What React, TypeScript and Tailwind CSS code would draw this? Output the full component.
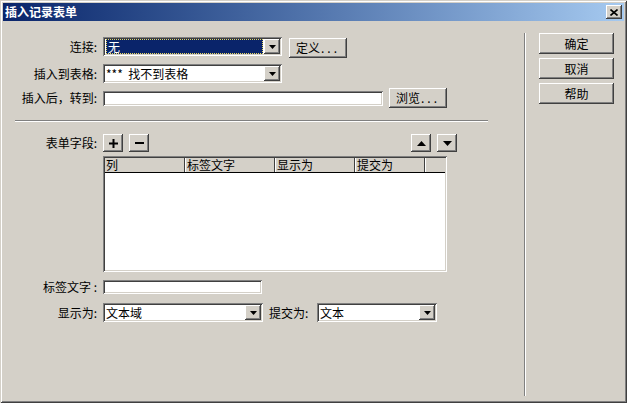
import React from "react";

const sunken =
  "shadow-[inset_1px_1px_0_#808080,inset_-1px_-1px_0_#ffffff,inset_2px_2px_0_#404040,inset_-2px_-2px_0_#d4d0c8]";
const raised =
  "shadow-[inset_-1px_-1px_0_#404040,inset_1px_1px_0_#ffffff,inset_-2px_-2px_0_#808080,inset_2px_2px_0_#d4d0c8]";

function DownTri() {
  return (
    <svg width="7" height="4" viewBox="0 0 7 4">
      <path d="M0 0H7L3.5 4Z" fill="#000" />
    </svg>
  );
}

function UpTri() {
  return (
    <svg width="9" height="5" viewBox="0 0 9 5">
      <path d="M0 5H9L4.5 0Z" fill="#000" />
    </svg>
  );
}

function DropBtn() {
  return (
    <div className={`w-[16px] h-full flex items-center justify-center bg-[#d4d0c8] ${raised}`}>
      <DownTri />
    </div>
  );
}

function Select({ w, children }: { w: string; children: React.ReactNode }) {
  return (
    <div className={`${w} h-[19px] flex p-[2px] bg-white ${sunken}`}>
      <div className="flex-1 flex items-center pl-[1px] overflow-hidden whitespace-pre">{children}</div>
      <DropBtn />
    </div>
  );
}

function Label({ children }: { children: React.ReactNode }) {
  return <div className="w-[97px] pr-[3px] text-right whitespace-pre">{children}</div>;
}

function Btn({ w, h, children }: { w: string; h: string; children: React.ReactNode }) {
  return (
    <div className={`${w} ${h} flex items-center justify-center bg-[#d4d0c8] ${raised}`}>{children}</div>
  );
}

export default function App() {
  return (
    <div
      className="w-[627px] h-[403px] bg-[#d4d0c8] p-[3px] flex flex-col text-[12px] leading-[14px] text-black shadow-[inset_1px_1px_0_#d4d0c8,inset_-1px_-1px_0_#404040,inset_2px_2px_0_#ffffff,inset_-2px_-2px_0_#808080]"
      style={{ fontFamily: '"Noto Sans CJK SC", "Noto Sans", sans-serif' }}
    >
      {/* Title bar */}
      <div className="h-[18px] flex items-center justify-between pl-[2px] pr-[2px] bg-gradient-to-r from-[#0a246a] to-[#a6caf0]">
        <span className="text-white font-bold text-[12px]">插入记录表单</span>
        <div className={`w-[16px] h-[14px] flex items-center justify-center bg-[#d4d0c8] ${raised}`}>
          <svg width="8" height="7" viewBox="0 0 8 7">
            <path d="M0.5 0.5L7.5 6.5M7.5 0.5L0.5 6.5" stroke="#000" strokeWidth="1.6" />
          </svg>
        </div>
      </div>

      {/* Body */}
      <div className="flex-1 flex">
        {/* Left panel */}
        <div className="w-[521px] flex flex-col pt-[15px]">
          {/* Row 1 */}
          <div className="flex items-center h-[21px]">
            <Label>连接:</Label>
            <div className="ml-[3px]">
              <div className={`w-[179px] h-[19px] flex p-[2px] bg-white ${sunken}`}>
                <div className="flex-1 flex items-center px-[1px]">
                  <div className="flex-1 h-full bg-[#0a246a] border border-dotted border-[#e8d860] text-white flex items-center pl-[1px]">
                    无
                  </div>
                </div>
                <DropBtn />
              </div>
            </div>
            <div className="ml-[7px] mt-[2px]">
              <Btn w="w-[58px]" h="h-[20px]">
                定义<span className="tracking-[3px] pl-[1px]">...</span>
              </Btn>
            </div>
          </div>

          {/* Row 2 */}
          <div className="flex items-center mt-[7px] h-[19px]">
            <Label>插入到表格:</Label>
            <div className="ml-[3px]">
              <Select w="w-[179px]">***  找不到表格</Select>
            </div>
          </div>

          {/* Row 3 */}
          <div className="flex items-center mt-[5px] h-[20px]">
            <Label>插入后，转到:</Label>
            <div className={`ml-[3px] w-[280px] h-[15px] bg-white ${sunken}`} />
            <div className="ml-[6px]">
              <Btn w="w-[58px]" h="h-[20px]">
                浏览<span className="tracking-[3px] pl-[1px]">...</span>
              </Btn>
            </div>
          </div>

          {/* Separator */}
          <div className="mt-[12px] ml-[12px] w-[473px] h-[2px] border-t border-t-[#808080] border-b border-b-white" />

          {/* Form fields row */}
          <div className="flex items-center mt-[12px] h-[18px]">
            <Label>表单字段:</Label>
            <div className="ml-[3px] flex gap-[6px]">
              <Btn w="w-[20px]" h="h-[18px]">
                <svg width="9" height="9" viewBox="0 0 9 9">
                  <path d="M3.5 0H5.5V3.5H9V5.5H5.5V9H3.5V5.5H0V3.5H3.5Z" fill="#000" />
                </svg>
              </Btn>
              <Btn w="w-[20px]" h="h-[18px]">
                <svg width="9" height="3" viewBox="0 0 9 3">
                  <rect x="0" y="0" width="9" height="2" fill="#000" />
                </svg>
              </Btn>
            </div>
            <div className="ml-[262px] flex gap-[6px]">
              <Btn w="w-[20px]" h="h-[18px]">
                <UpTri />
              </Btn>
              <Btn w="w-[20px]" h="h-[18px]">
                <svg width="9" height="5" viewBox="0 0 9 5">
                  <path d="M0 0H9L4.5 5Z" fill="#000" />
                </svg>
              </Btn>
            </div>
          </div>

          {/* Table */}
          <div className="flex mt-[4px]">
            <div className="w-[100px]" />
            <div className={`w-[344px] h-[116px] bg-white p-[2px] flex flex-col ${sunken}`}>
              <div className="h-[15px] flex bg-[#d4d0c8] border-b border-b-black">
                <div className="w-[80px] border-r border-r-[#404040] pl-[1px] flex items-center">列</div>
                <div className="w-[90px] border-l border-l-white border-r border-r-[#404040] pl-[1px] flex items-center">标签文字</div>
                <div className="w-[80px] border-l border-l-white border-r border-r-[#404040] pl-[1px] flex items-center">显示为</div>
                <div className="w-[70px] border-l border-l-white border-r border-r-[#404040] pl-[1px] flex items-center">提交为</div>
                <div className="flex-1 border-l border-l-white" />
              </div>
              <div className="flex-1 bg-white" />
            </div>
          </div>

          {/* Label text */}
          <div className="flex items-center mt-[8px] h-[14px]">
            <Label>标签文字 :</Label>
            <div className={`ml-[3px] w-[159px] h-[14px] bg-white ${sunken}`} />
          </div>

          {/* Display / submit */}
          <div className="flex items-center mt-[9px] h-[19px]">
            <Label>显示为:</Label>
            <div className="ml-[3px]">
              <Select w="w-[160px]">文本域</Select>
            </div>
            <div className="ml-[6px] w-[48px] whitespace-pre">提交为:</div>
            <Select w="w-[120px]">文本</Select>
          </div>
        </div>

        {/* Vertical separator */}
        <div className="mt-[12px] mb-[4px] w-[2px] border-l border-l-[#808080] border-r border-r-white" />

        {/* Right panel */}
        <div className="flex flex-col pt-[12px] pl-[13px] gap-[4px]">
          <Btn w="w-[75px]" h="h-[21px]">确定</Btn>
          <Btn w="w-[75px]" h="h-[21px]">取消</Btn>
          <Btn w="w-[75px]" h="h-[21px]">帮助</Btn>
        </div>
      </div>
    </div>
  );
}
